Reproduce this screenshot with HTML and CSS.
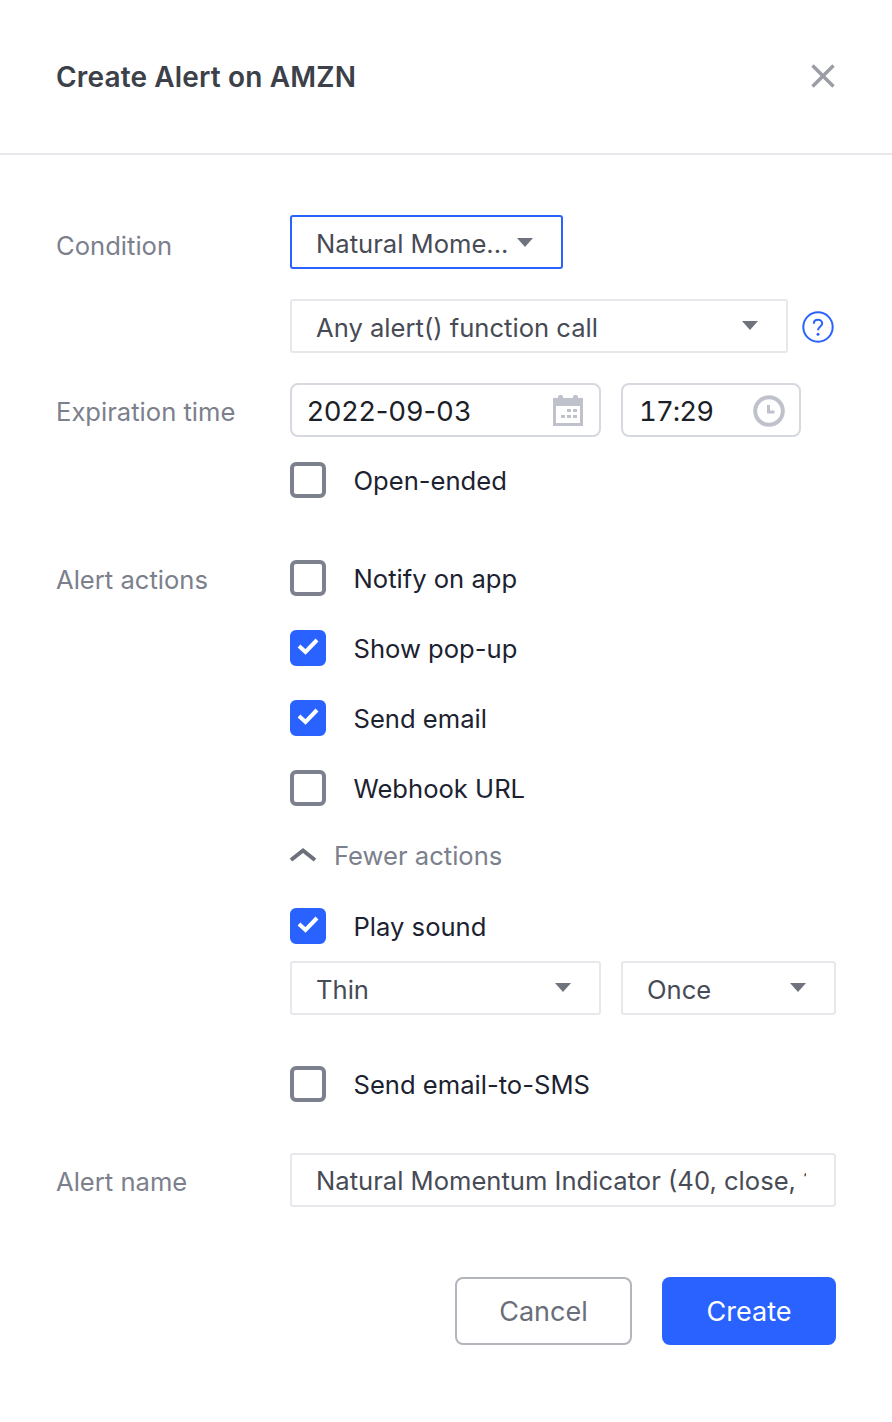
FILE: index.html
```html
<!DOCTYPE html>
<html lang="en">
    <head>
        <meta charset="UTF-8" />
        <meta name="viewport" content="width=device-width, initial-scale=1.0" />
        <title>Create Alert on AMZN</title>
        <link rel="stylesheet" href="styles.css">
    </head>
    <body>
        <div class="dialog">
            <header class="dialog-header">
                <h1>Create Alert on AMZN</h1>
                <svg class="close-icon" width="26" height="26" viewBox="0 0 26 26" aria-label="Close">
                    <path d="M2.500 2.500 L23.500 23.500 M23.500 2.500 L2.500 23.500" />
                </svg>
            </header>

            <div class="dialog-body">
                <div class="row row-condition">
                    <div class="row-label">Condition</div>
                    <div class="row-fields">
                        <div class="select select-active">
                            <span>Natural Mome...</span>
                            <i class="caret"></i>
                        </div>
                        <div class="field-line">
                            <div class="select select-trigger">
                                <span>Any alert() function call</span>
                                <i class="caret"></i>
                            </div>
                            <svg class="help-icon" width="32" height="32" viewBox="0 0 32 32">
                                <circle cx="16" cy="16" r="14.700" />
                                <path d="M11.800 12.700 C11.800 10.200 13.700 8.700 16 8.700 C18.300 8.700 20.200 10.200 20.200 12.400 C20.200 15.300 16 15.600 16 19.200" />
                                <circle class="help-dot" cx="16" cy="23.300" r="1.500" />
                            </svg>
                        </div>
                    </div>
                </div>

                <div class="row row-expiry">
                    <div class="row-label">Expiration time</div>
                    <div class="row-fields">
                        <div class="field-line field-line-wide">
                            <div class="input input-date">
                                <span>2022-09-03</span>
                                <svg width="32" height="32" viewBox="0 0 32 32">
                                    <path class="icon-fill" fill-rule="evenodd" d="M1 3 H6 V2 Q6 0 8 0 H9 Q11 0 11 2 V3 H21 V2 Q21 0 23 0 H24 Q26 0 26 2 V3 H31 V31 H1 Z M4 11 V28 H28 V11 Z" />
                                    <rect class="icon-fill" x="15" y="14" width="4" height="3" />
                                    <rect class="icon-fill" x="21" y="14" width="4" height="3" />
                                    <rect class="icon-fill" x="9" y="20" width="4" height="3" />
                                    <rect class="icon-fill" x="15" y="20" width="4" height="3" />
                                    <rect class="icon-fill" x="21" y="20" width="4" height="3" />
                                </svg>
                            </div>
                            <div class="input input-time">
                                <span>17:29</span>
                                <svg width="32" height="32" viewBox="0 0 32 32">
                                    <circle class="icon-ring" cx="16" cy="16" r="13.800" />
                                    <path class="icon-ring-thin" d="M15.500 10 V17 H21.500" />
                                </svg>
                            </div>
                        </div>
                        <label class="check check-open">
                            <i class="box"></i>
                            <span>Open-ended</span>
                        </label>
                    </div>
                </div>

                <div class="row row-actions">
                    <div class="row-label">Alert actions</div>
                    <div class="row-fields">
                        <div class="check-list">
                            <label class="check">
                                <i class="box"></i>
                                <span>Notify on app</span>
                            </label>
                            <label class="check">
                                <i class="box box-on"><svg width="24" height="20" viewBox="0 0 24 20"><path d="M3 10 L9.500 16 L21 4" /></svg></i>
                                <span>Show pop-up</span>
                            </label>
                            <label class="check">
                                <i class="box box-on"><svg width="24" height="20" viewBox="0 0 24 20"><path d="M3 10 L9.500 16 L21 4" /></svg></i>
                                <span>Send email</span>
                            </label>
                            <label class="check">
                                <i class="box"></i>
                                <span>Webhook URL</span>
                            </label>
                        </div>
                        <div class="fewer">
                            <svg width="28" height="16" viewBox="0 0 28 16"><path d="M2 13 L14 3.500 L26 13" /></svg>
                            <span>Fewer actions</span>
                        </div>
                        <label class="check">
                            <i class="box box-on"><svg width="24" height="20" viewBox="0 0 24 20"><path d="M3 10 L9.500 16 L21 4" /></svg></i>
                            <span>Play sound</span>
                        </label>
                        <div class="field-line field-line-sound">
                            <div class="select select-tone">
                                <span>Thin</span>
                                <i class="caret"></i>
                            </div>
                            <div class="select select-repeat">
                                <span>Once</span>
                                <i class="caret"></i>
                            </div>
                        </div>
                        <label class="check check-sms">
                            <i class="box"></i>
                            <span>Send email-to-SMS</span>
                        </label>
                    </div>
                </div>

                <div class="row row-name">
                    <div class="row-label">Alert name</div>
                    <div class="row-fields">
                        <div class="select select-name">
                            <span class="clip">Natural Momentum Indicator (40, close, 14)</span>
                        </div>
                    </div>
                </div>

                <div class="dialog-footer">
                    <button class="btn btn-cancel">Cancel</button>
                    <button class="btn btn-create">Create</button>
                </div>
            </div>
        </div>
    </body>
</html>
```

FILE: styles.css
```css
* {
    box-sizing: border-box;
}

html,
body {
    margin: 0;
    padding: 0;
    background: #ffffff;
}

body {
    font-family: "Inter", "Liberation Sans", sans-serif;
    font-size: 25.600px;
    color: #1c2230;
}

.dialog {
    width: 892px;
    height: 1422px;
    overflow: hidden;
}

.dialog-header {
    height: 155px;
    padding: 0 56px;
    border-bottom: 2px solid #e6e8ec;
    display: flex;
    justify-content: space-between;
    align-items: flex-start;
}

.dialog-header h1 {
    margin: 60px 0 0;
    font-size: 28px;
    line-height: 34px;
    font-weight: 600;
    letter-spacing: 0.150px;
    color: #3c4049;
}

.close-icon {
    margin-top: 63px;
}

.close-icon path {
    fill: none;
    stroke: #9a9da5;
    stroke-width: 3.500;
}

.dialog-body {
    padding: 60px 56px 0;
}

.row {
    display: grid;
    grid-template-columns: 234px 546px;
    width: 780px;
}

.row-fields {
    width: 546px;
}

.row-label {
    color: #7b808c;
    line-height: 32px;
}

.row-condition .row-label {
    margin-top: 15px;
}

.row-expiry {
    margin-top: 30px;
}

.row-expiry .row-label {
    margin-top: 13px;
}

.row-actions {
    margin-top: 62px;
}

.row-actions .row-label {
    margin-top: 4px;
}

.row-name {
    margin-top: 51px;
}

.row-name .row-label {
    margin-top: 13px;
}

.select,
.input {
    height: 54px;
    display: flex;
    align-items: center;
    justify-content: space-between;
    background: #ffffff;
    white-space: nowrap;
}

.select {
    padding: 0 28px 0 24px;
    border: 2px solid #e6e8ec;
    border-radius: 3px;
    color: #474b55;
}

.select span {
    margin-top: 2px;
}

.select-active {
    width: 273px;
    border-color: #2962ff;
    margin-bottom: 30px;
}

.select-trigger {
    width: 498px;
}

.select-trigger .caret,
.select-tone .caret,
.select-repeat .caret {
    margin-top: -2px;
}

.select-tone {
    width: 311px;
}

.select-repeat {
    width: 215px;
}

.select-name {
    width: 546px;
    justify-content: flex-start;
}

.select span.clip {
    display: block;
    width: 494px;
    overflow: hidden;
    margin-top: 0;
}

.caret {
    width: 0;
    height: 0;
    border-left: 8px solid transparent;
    border-right: 8px solid transparent;
    border-top: 9px solid #6f737e;
}

.field-line {
    display: flex;
    align-items: center;
    gap: 14px;
}

.field-line-wide {
    gap: 20px;
}

.field-line-sound {
    gap: 20px;
    margin-top: 17px;
}

.help-icon {
    margin-top: 2px;
}

.help-icon circle {
    fill: none;
    stroke: #2962ff;
    stroke-width: 2;
}

.help-icon path {
    fill: none;
    stroke: #2962ff;
    stroke-width: 2;
}

.help-icon .help-dot {
    fill: #2962ff;
    stroke: none;
}

.input {
    border: 2px solid #d7d9e0;
    border-radius: 8px;
    color: #1c1f28;
    font-size: 27.500px;
    letter-spacing: 0.250px;
}

.input span {
    margin-top: 2px;
}

.input svg {
    margin-top: 2px;
}

.input-date {
    width: 311px;
    padding: 0 15px;
}

.input-time {
    width: 180px;
    padding: 0 14px 0 16px;
    font-variant-numeric: tabular-nums;
    letter-spacing: -0.900px;
}

.icon-fill {
    fill: #c0c2cb;
}

.icon-ring {
    fill: none;
    stroke: #c0c2cb;
    stroke-width: 4;
}

.icon-ring-thin {
    fill: none;
    stroke: #c0c2cb;
    stroke-width: 3;
}

.check {
    display: flex;
    align-items: center;
    gap: 27.500px;
    height: 36px;
}

.check-open {
    margin-top: 25px;
}

.check-sms {
    margin-top: 51px;
}

.check-list {
    display: flex;
    flex-direction: column;
    gap: 34px;
}

.box {
    width: 36px;
    height: 36px;
    flex: none;
    border: 4px solid #7d818e;
    border-radius: 6px;
    display: flex;
    align-items: center;
    justify-content: center;
}

.box-on {
    background: #2962ff;
    border-color: #2962ff;
}

.box-on svg {
    margin-top: -4px;
    flex: none;
}

.box-on path {
    fill: none;
    stroke: #ffffff;
    stroke-width: 4;
}

.fewer {
    display: flex;
    align-items: center;
    gap: 17px;
    height: 32px;
    margin: 33px 0 37px -1px;
    color: #7b808c;
}

.fewer path {
    fill: none;
    stroke: #6c707b;
    stroke-width: 4;
}

.dialog-footer {
    display: flex;
    justify-content: flex-end;
    gap: 30px;
    margin-top: 70px;
    width: 780px;
}

.btn {
    height: 68px;
    border-radius: 8px;
    font: inherit;
    font-size: 27px;
    padding: 0;
}

.btn-cancel {
    width: 177px;
    background: #ffffff;
    border: 2px solid #b3b5bd;
    color: #6a6e79;
}

.btn-create {
    width: 174px;
    background: #2962ff;
    border: 0;
    color: #ffffff;
}
```
